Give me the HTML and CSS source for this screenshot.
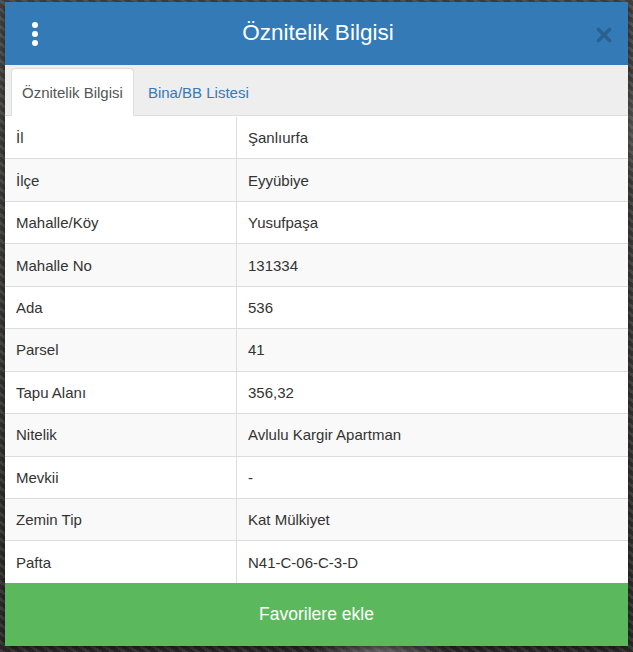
FILE: index.html
```html
<!DOCTYPE html>
<html lang="tr">
<head>
<meta charset="utf-8">
<title>Öznitelik Bilgisi</title>
<link rel="stylesheet" href="styles.css">
</head>
<body>
<div class="map">
  <div class="panel">
    <header class="head">
      <button class="menu" aria-label="Menü">
        <span class="dot"></span><span class="dot"></span><span class="dot"></span>
      </button>
      <h1 class="title">Öznitelik Bilgisi</h1>
      <button class="close" aria-label="Kapat">
        <svg width="16" height="16" viewBox="0 0 16 16"><path d="M2.5 2.5 L13.5 13.5 M13.5 2.5 L2.5 13.5" stroke="currentColor" stroke-width="3.6" stroke-linecap="round" fill="none"/></svg>
      </button>
    </header>
    <nav class="tabs">
      <a class="tab active">Öznitelik Bilgisi</a>
      <a class="tab">Bina/BB Listesi</a>
    </nav>
    <div class="table">
      <div class="row"><div class="cell key">İl</div><div class="cell val">Şanlıurfa</div></div>
      <div class="row"><div class="cell key">İlçe</div><div class="cell val">Eyyübiye</div></div>
      <div class="row"><div class="cell key">Mahalle/Köy</div><div class="cell val">Yusufpaşa</div></div>
      <div class="row"><div class="cell key">Mahalle No</div><div class="cell val">131334</div></div>
      <div class="row"><div class="cell key">Ada</div><div class="cell val">536</div></div>
      <div class="row"><div class="cell key">Parsel</div><div class="cell val">41</div></div>
      <div class="row"><div class="cell key">Tapu Alanı</div><div class="cell val">356,32</div></div>
      <div class="row"><div class="cell key">Nitelik</div><div class="cell val">Avlulu Kargir Apartman</div></div>
      <div class="row"><div class="cell key">Mevkii</div><div class="cell val">-</div></div>
      <div class="row"><div class="cell key">Zemin Tip</div><div class="cell val">Kat Mülkiyet</div></div>
      <div class="row"><div class="cell key">Pafta</div><div class="cell val">N41-C-06-C-3-D</div></div>
    </div>
    <button class="fav">Favorilere ekle</button>
  </div>
</div>
</body>
</html>
```
FILE: styles.css
```css
html, body {
  margin: 0;
  padding: 0;
}
body {
  font-family: "Liberation Sans", Arial, sans-serif;
  color: #333;
}
.map {
  width: 633px;
  height: 652px;
  overflow: hidden;
  padding: 2px 0 0 5px;
  box-sizing: border-box;
  background-color: #3b3a38;
  background-image:
    radial-gradient(circle at 12% 88%, rgba(200,200,195,0.35) 0, rgba(0,0,0,0) 40px),
    radial-gradient(circle at 95% 20%, rgba(180,180,175,0.35) 0, rgba(0,0,0,0) 60px),
    radial-gradient(circle at 60% 99%, rgba(220,220,215,0.35) 0, rgba(0,0,0,0) 70px),
    repeating-linear-gradient(35deg, rgba(255,255,255,0.08) 0 3px, rgba(0,0,0,0.1) 3px 7px),
    linear-gradient(180deg, #4a4846, #2e2d2b);
}
.panel {
  width: 623px;
  height: 644px;
  display: flex;
  flex-direction: column;
  background: #fff;
  box-shadow: 0 2px 6px rgba(0,0,0,0.5);
}
.head {
  height: 63px;
  flex: none;
  background: #337ab7;
  display: flex;
  align-items: center;
  padding: 0 15px 0 24px;
}
.menu {
  width: 12px;
  height: 24px;
  padding: 0;
  border: 0;
  background: none;
  display: flex;
  flex-direction: column;
  align-items: center;
  justify-content: space-between;
}
.dot {
  width: 6px;
  height: 6px;
  border-radius: 50%;
  background: #fff;
}
.title {
  flex: 1;
  margin: 0;
  text-align: center;
  color: #fff;
  font-weight: normal;
  font-size: 22.5px;
  padding-left: 0;
  margin-top: -2px;
}
.close {
  width: 18px;
  height: 18px;
  padding: 0;
  border: 0;
  background: none;
  color: #29628f;
  display: flex;
  align-items: center;
  justify-content: center;
  margin-top: 2px;
}
.tabs {
  height: 51px;
  flex: none;
  box-sizing: border-box;
  background: #eee;
  border-bottom: 1px solid #ddd;
  display: flex;
  align-items: flex-end;
  padding-left: 6px;
}
.tab {
  height: 48px;
  box-sizing: border-box;
  margin-bottom: -1px;
  margin-right: 3px;
  padding: 0 10px;
  border: 1px solid transparent;
  border-radius: 4px 4px 0 0;
  display: flex;
  align-items: center;
  font-size: 15px;
  color: #337ab7;
}
.tab.active {
  background: #fff;
  border-color: #ddd;
  border-bottom-color: #fff;
  color: #555;
}
.table {
  flex: none;
  display: flex;
  flex-direction: column;
}
.row {
  height: 42.45px;
  box-sizing: border-box;
  display: flex;
  border-top: 1px solid #ddd;
  font-size: 15px;
}
.row:first-child {
  border-top-color: #fff;
}
.row:nth-child(even) {
  background: #f9f9f9;
}
.cell {
  display: flex;
  align-items: center;
  padding: 0 11px;
}
.key {
  width: 232px;
  box-sizing: border-box;
  border-right: 1px solid #ddd;
}
.fav {
  flex: 1;
  border: 0;
  margin: 0;
  background: #5cb85c;
  color: #fff;
  font-family: "Liberation Sans", Arial, sans-serif;
  font-size: 17.5px;
}
```
